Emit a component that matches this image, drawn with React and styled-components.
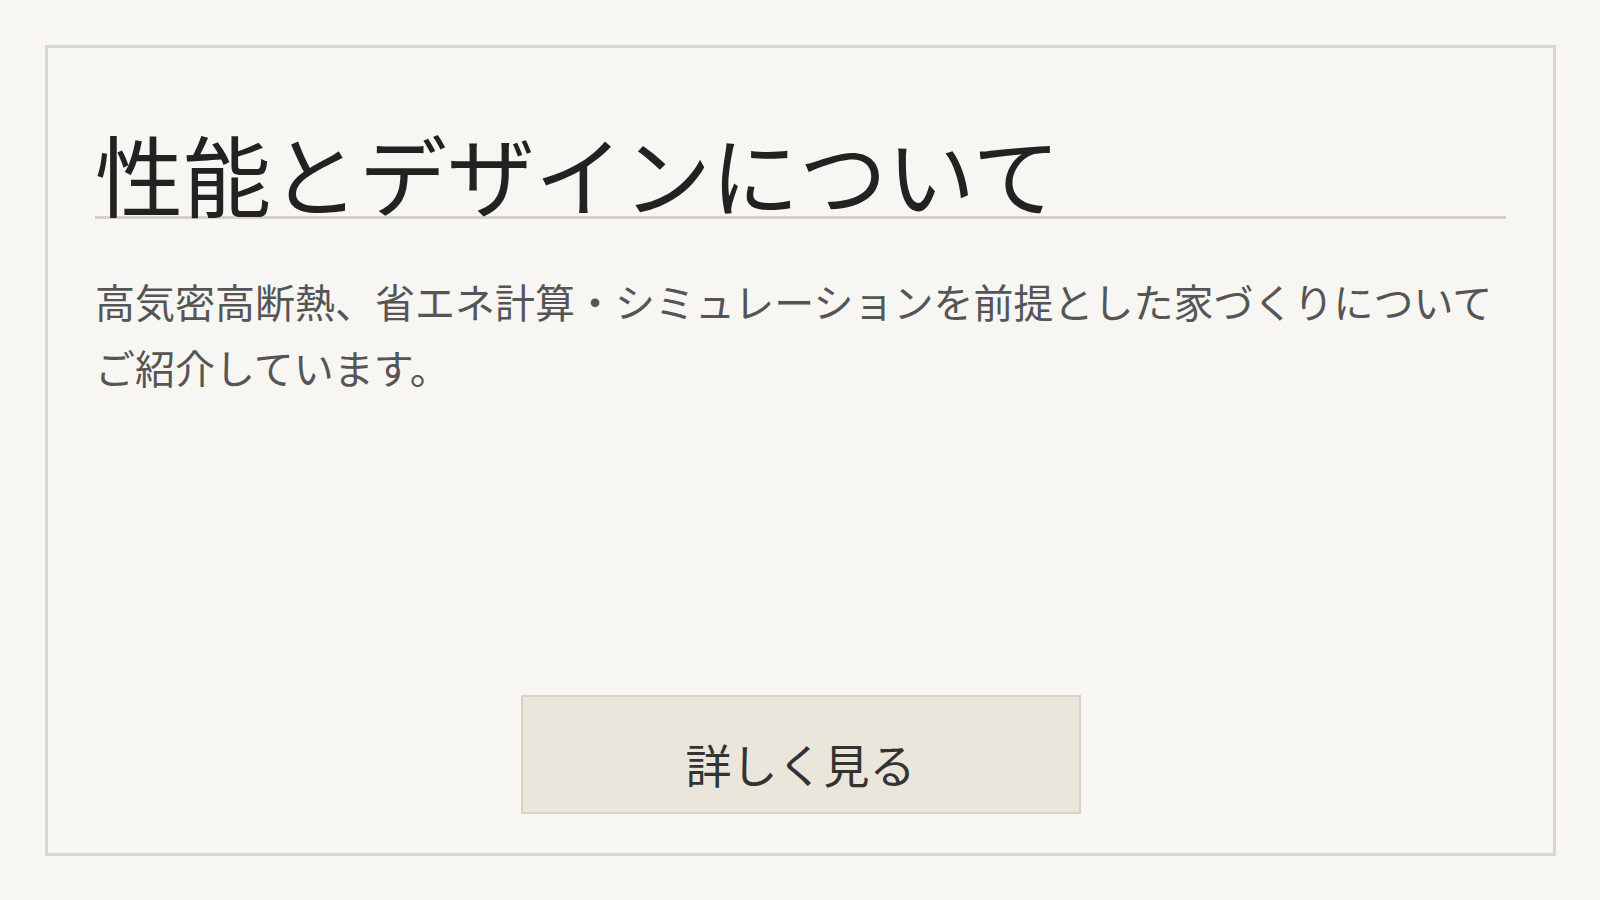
import React from "react";
import styled, { createGlobalStyle } from "styled-components";

const Global = createGlobalStyle`
  html, body { margin: 0; padding: 0; background: #f7f6f2; }
  body { font-family: "Noto Sans CJK JP", "Noto Sans", sans-serif; }
  * { box-sizing: border-box; }
`;

const Page = styled.div`
  padding: 45px 44px 44px 45px;
`;

const Card = styled.section`
  display: flex;
  flex-direction: column;
  height: 811px;
  border: 3px solid #dbd6cb;
  background: #f7f6f2;
  padding: 80px 47px 39px 47px;
`;

const Title = styled.h2`
  margin: 0;
  font-size: 88px;
  font-weight: 400;
  line-height: 1;
  color: #222;
  border-bottom: 3px solid #d6d1c5;
  font-family: "Noto Sans CJK JP", sans-serif;
`;

const Lead = styled.p`
  margin: 49px 0 0;
  font-size: 40px;
  line-height: 1.65;
  color: #555;
  font-family: "Noto Sans CJK JP", sans-serif;
`;

const MoreButton = styled.a`
  margin: auto auto 0;
  width: 560px;
  height: 119px;
  display: flex;
  align-items: center;
  justify-content: center;
  padding-top: 16px;
  background: #eae6dc;
  border: 2px solid #d8d3c6;
  color: #333;
  font-size: 46px;
  line-height: 1;
  text-decoration: none;
  font-family: "Noto Sans CJK JP", sans-serif;
`;

export default function App() {
  return (
    <>
      <Global />
      <Page>
        <Card>
          <Title>性能とデザインについて</Title>
          <Lead>
            高気密高断熱、省エネ計算・シミュレーションを前提とした家づくりについてご紹介しています。
          </Lead>
          <MoreButton href="#">詳しく見る</MoreButton>
        </Card>
      </Page>
    </>
  );
}
